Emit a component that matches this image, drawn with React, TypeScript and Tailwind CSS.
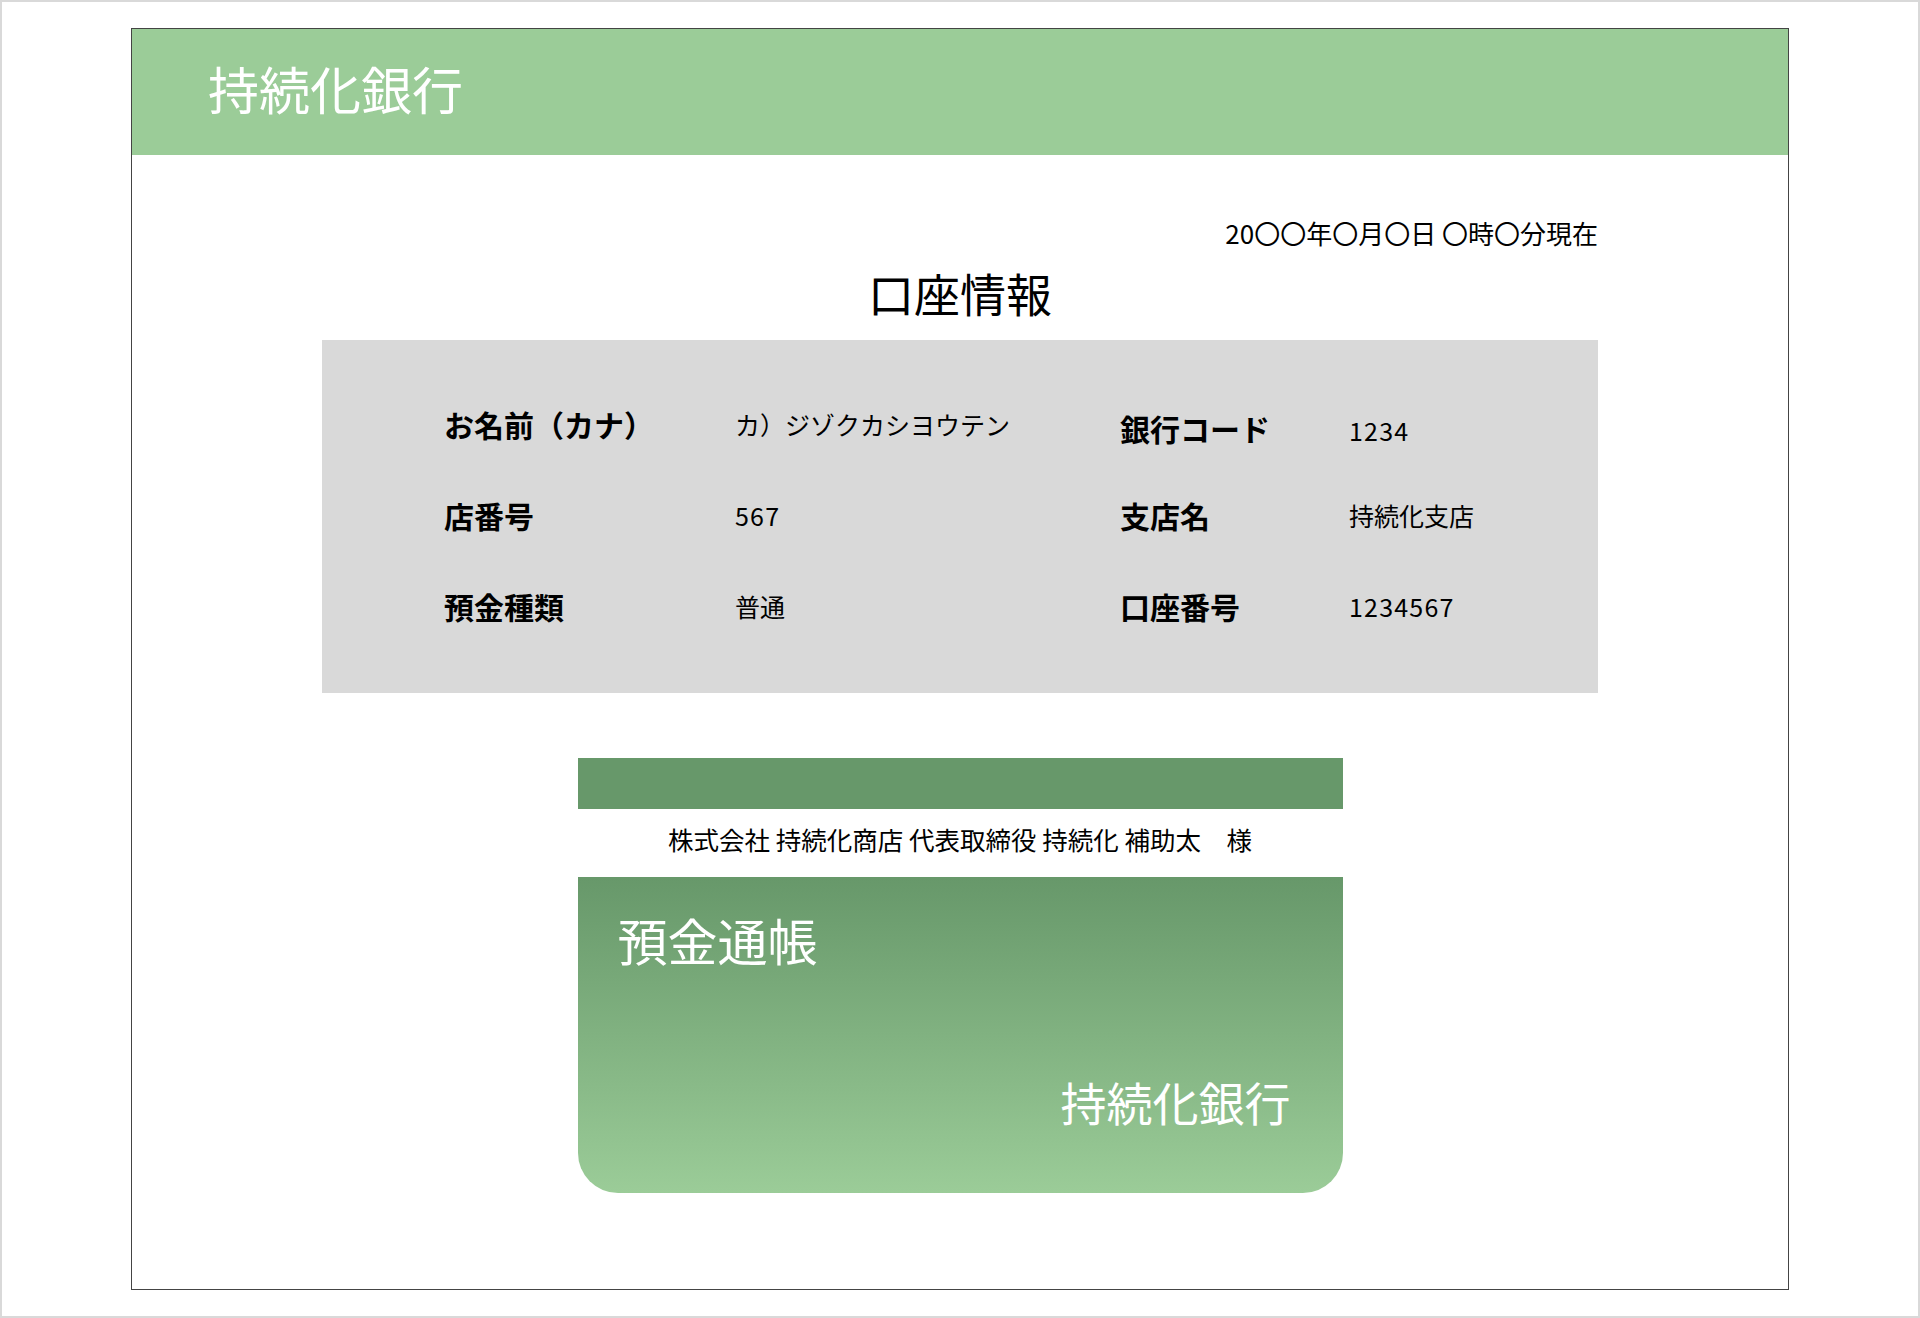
import React from "react";

const rows = [
  { l1: "お名前（カナ）", v1: "カ）ジゾクカシヨウテン", l2: "銀行コード", v2: "1234", first: true },
  { l1: "店番号", v1: "567", l2: "支店名", v2: "持続化支店", first: false },
  { l1: "預金種類", v1: "普通", l2: "口座番号", v2: "1234567", first: false },
];

const isDigits = (s: string) => /^\d+$/.test(s);

export default function App() {
  return (
    <div className="w-[1920px] h-[1318px] border-2 border-[#d9d9d9] bg-white pt-[26px] font-['Noto_Sans_CJK_JP','Noto_Sans',sans-serif] text-black">
      <div className="mx-auto w-[1658px] h-[1262px] border border-[#444] flex flex-col items-center">
        <header className="w-full h-[126px] bg-[#9bcc98] flex items-center pl-[76px] pb-[8px] shrink-0">
          <h1 className="text-[51px] leading-none text-white font-normal">持続化銀行</h1>
        </header>

        <div className="w-[1276px] mt-[65px] h-[26px] text-right text-[26px] leading-[26px]">
          20〇〇年〇月〇日 〇時〇分現在
        </div>

        <h2 className="mt-[23px] h-[46px] text-[46px] leading-[46px] font-normal">口座情報</h2>

        <section className="mt-[25px] w-[1276px] h-[353px] bg-[#d9d9d9] pt-[64px] pl-[122px]">
          <div className="grid grid-cols-[291px_385px_229px_1fr] gap-y-[51px]">
            {rows.map((r) => (
              <React.Fragment key={r.l1}>
                <div className="h-[40px] flex items-center text-[30px] font-bold leading-none">{r.l1}</div>
                <div className={`h-[40px] flex items-center text-[25px] leading-none ${isDigits(r.v1) ? "tracking-[1.2px]" : ""}`}>{r.v1}</div>
                <div className={`h-[40px] flex items-center text-[30px] font-bold leading-none ${r.first ? "pt-[8px]" : ""}`}>{r.l2}</div>
                <div className={`h-[40px] flex items-center text-[25px] leading-none ${isDigits(r.v2) ? "tracking-[1.2px]" : ""} ${r.first ? "pt-[12px]" : ""}`}>{r.v2}</div>
              </React.Fragment>
            ))}
          </div>
        </section>

        <section className="mt-[65px] w-[765px] flex flex-col">
          <div className="h-[51px] bg-[#67986a]" />
          <div className="h-[68px] bg-white flex items-center justify-center pb-[8px] text-[25.5px] leading-none">
            株式会社 持続化商店 代表取締役 持続化 補助太　様
          </div>
          <div className="h-[316px] rounded-b-[40px] bg-linear-to-b from-[#67986a] to-[#9bcc98] flex flex-col justify-between pt-[37px] pb-[69px] pl-[40px] pr-[52px] text-white">
            <div className="text-[50px] leading-none">預金通帳</div>
            <div className="text-[46px] leading-none text-right">持続化銀行</div>
          </div>
        </section>
      </div>
    </div>
  );
}
